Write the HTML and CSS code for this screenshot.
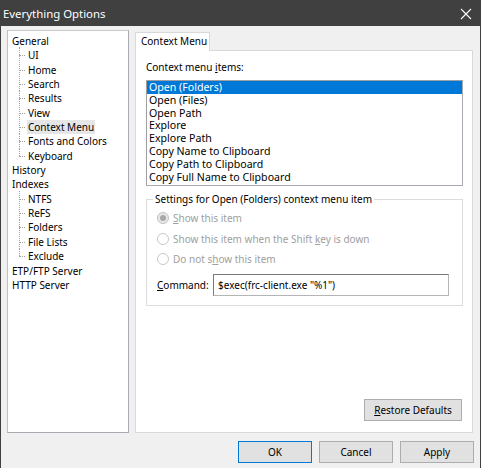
FILE: index.html
```html
<!DOCTYPE html>
<html>
<head>
<meta charset="utf-8">
<title>Everything Options</title>
<link rel="stylesheet" href="styles.css">
</head>
<body>
<div class="window">
  <div class="titlebar">
    <span class="title">Everything Options</span>
    <svg class="close" width="12" height="12" viewBox="0 0 12 12"><path d="M1 1 L11 11 M11 1 L1 11" stroke="#fff" stroke-width="1.1" fill="none"/></svg>
  </div>
  <div class="body">
    <div class="main">
      <div class="tree">
        <div class="node">General</div>
        <ul class="children">
          <li><span>UI</span></li>
          <li><span>Home</span></li>
          <li><span>Search</span></li>
          <li><span>Results</span></li>
          <li><span>View</span></li>
          <li><span class="sel">Context Menu</span></li>
          <li><span>Fonts and Colors</span></li>
          <li class="last"><span>Keyboard</span></li>
        </ul>
        <div class="node">History</div>
        <div class="node">Indexes</div>
        <ul class="children">
          <li><span>NTFS</span></li>
          <li><span>ReFS</span></li>
          <li><span>Folders</span></li>
          <li><span>File Lists</span></li>
          <li class="last"><span>Exclude</span></li>
        </ul>
        <div class="node">ETP/FTP Server</div>
        <div class="node">HTTP Server</div>
      </div>
      <div class="tabs">
        <div class="tabstrip"><div class="tab">Context Menu</div></div>
        <div class="panel">
          <div class="label">Context menu <u>i</u>tems:</div>
          <div class="listbox">
            <div class="item selected">Open (Folders)</div>
            <div class="item">Open (Files)</div>
            <div class="item">Open Path</div>
            <div class="item">Explore</div>
            <div class="item">Explore Path</div>
            <div class="item">Copy Name to Clipboard</div>
            <div class="item">Copy Path to Clipboard</div>
            <div class="item">Copy Full Name to Clipboard</div>
          </div>
          <div class="group">
            <div class="legend">Settings for Open (Folders) context menu item</div>
            <div class="radio"><span class="dot checked"></span><span><u>S</u>how this item</span></div>
            <div class="radio"><span class="dot"></span><span>Show this item when the Shift <u>k</u>ey is down</span></div>
            <div class="radio"><span class="dot"></span><span>Do not s<u>h</u>ow this item</span></div>
            <div class="command">
              <span class="cmdlabel"><u>C</u>ommand:</span>
              <div class="input">$exec(frc-client.exe "%1")</div>
            </div>
          </div>
          <div class="restore-row">
            <div class="btn restore"><u>R</u>estore Defaults</div>
          </div>
        </div>
      </div>
    </div>
    <div class="buttons">
      <div class="btn default">OK</div>
      <div class="btn">Cancel</div>
      <div class="btn">Apply</div>
    </div>
  </div>
</div>
</body>
</html>
```

FILE: styles.css
```css
* { box-sizing: border-box; }
html, body { margin: 0; padding: 0; }
body {
  width: 481px;
  height: 468px;
  overflow: hidden;
  font-family: "Noto Sans", "Open Sans", sans-serif;
  font-size: 10px;
  color: #000;
}
u { text-decoration: underline; text-underline-offset: 1px; }
.window {
  width: 481px;
  height: 468px;
  display: flex;
  flex-direction: column;
  background: #f0f0f0;
  border-left: 1px solid #404040;
  border-right: 1px solid #404040;
}
.titlebar {
  height: 26px;
  background: #404040;
  color: #fff;
  display: flex;
  align-items: center;
  justify-content: space-between;
  padding: 0 9px 0 3px;
  margin: 0 -1px;
  flex: none;
}
.title { font-size: 11.4px; }
.close { margin-top: 1px; }
.body {
  flex: 1;
  display: flex;
  flex-direction: column;
  padding: 4px 6px 0 6px;
}
.main {
  display: flex;
  gap: 6px;
  height: 403px;
  flex: none;
}
.tree {
  width: 122px;
  background: #fff;
  border: 1px solid #a8abb2;
  border-top-color: #c8c8c8;
  border-left-color: #c0c0c0;
  padding: 3px 0 0 4px;
}
.node, .children li {
  height: 14.35px;
  line-height: 14.35px;
  white-space: nowrap;
}
.children {
  list-style: none;
  margin: 0;
  padding: 0 0 0 15px;
}
.children li {
  position: relative;
  padding-left: 0;
}
.children li::before {
  content: "";
  position: absolute;
  left: -8px;
  top: 7px;
  width: 6px;
  border-top: 1px dotted #a0a0a0;
}
.children li::after {
  content: "";
  position: absolute;
  left: -8px;
  top: -1px;
  height: 15.35px;
  border-left: 1px dotted #a0a0a0;
}
.children li.last::after { height: 8px; }
.children span { padding: 0 1px; display: inline-block; height: 14px; line-height: 14.35px; }
.children span.sel { background: #e6e6e6; }
.tabs {
  width: 338px;
  display: flex;
  flex-direction: column;
}
.tabstrip {
  height: 21px;
  padding-top: 2px;
  display: flex;
  position: relative;
  z-index: 1;
  margin-bottom: -1px;
}
.tab {
  width: 75px;
  background: #fff;
  border: 1px solid #d9d9d9;
  border-bottom: none;
  padding-left: 5px;
  line-height: 17px;
}
.panel {
  flex: 1;
  background: #fff;
  border: 1px solid #d9d9d9;
  display: flex;
  flex-direction: column;
  padding: 9px 9px 11px 10px;
}
.label { line-height: 14px; height: 14px; margin-bottom: 6px; }
.listbox {
  height: 106px;
  border: 1px solid #a0a0a0;
  border-right-color: #a8abb2;
  border-bottom-color: #a8abb2;
  padding: 0;
  font-size: 10.6px;
}
.item {
  height: 12.8px;
  line-height: 12.8px;
  padding-left: 2px;
  white-space: nowrap;
}
.item.selected {
  background: #0078d7;
  color: #fff;
}
.group {
  margin-top: 13px;
  height: 107px;
  border: 1px solid #dcdcdc;
  position: relative;
  padding: 8px 0 0 10px;
  color: #a0a0a0;
}
.legend {
  position: absolute;
  top: -8px;
  left: 6px;
  background: #fff;
  padding: 0 2px;
  color: #000;
  line-height: 14px;
}
.radio {
  display: flex;
  align-items: center;
  height: 20.5px;
  gap: 4px;
}
.dot {
  width: 12px;
  height: 12px;
  border: 1px solid #c8c8c8;
  border-radius: 50%;
  background: #fff;
  display: flex;
  align-items: center;
  justify-content: center;
}
.dot.checked { background: #e8e8e8; border-color: #c0c0c0; }
.dot.checked::after {
  content: "";
  width: 6px;
  height: 6px;
  border-radius: 50%;
  background: #a8a8a8;
}
.command {
  display: flex;
  align-items: center;
  margin-top: 4px;
  color: #000;
}
.cmdlabel { width: 56px; }
.input {
  width: 236px;
  height: 22px;
  border: 1px solid #7a7a7a;
  border-right-color: #b5b5b5;
  border-bottom-color: #b5b5b5;
  padding-left: 4px;
  line-height: 20px;
  white-space: nowrap;
}
.restore-row {
  margin-top: auto;
  display: flex;
  justify-content: flex-end;
  padding-right: 1px;
}
.btn {
  width: 74px;
  height: 22px;
  background: #e1e1e1;
  border: 1px solid #adadad;
  display: flex;
  align-items: center;
  justify-content: center;
}
.btn.restore { width: 98px; }
.btn.default { border-color: #0078d7; }
.buttons {
  display: flex;
  justify-content: flex-end;
  gap: 7px;
  margin-top: 8px;
  padding-right: 0;
}
```
